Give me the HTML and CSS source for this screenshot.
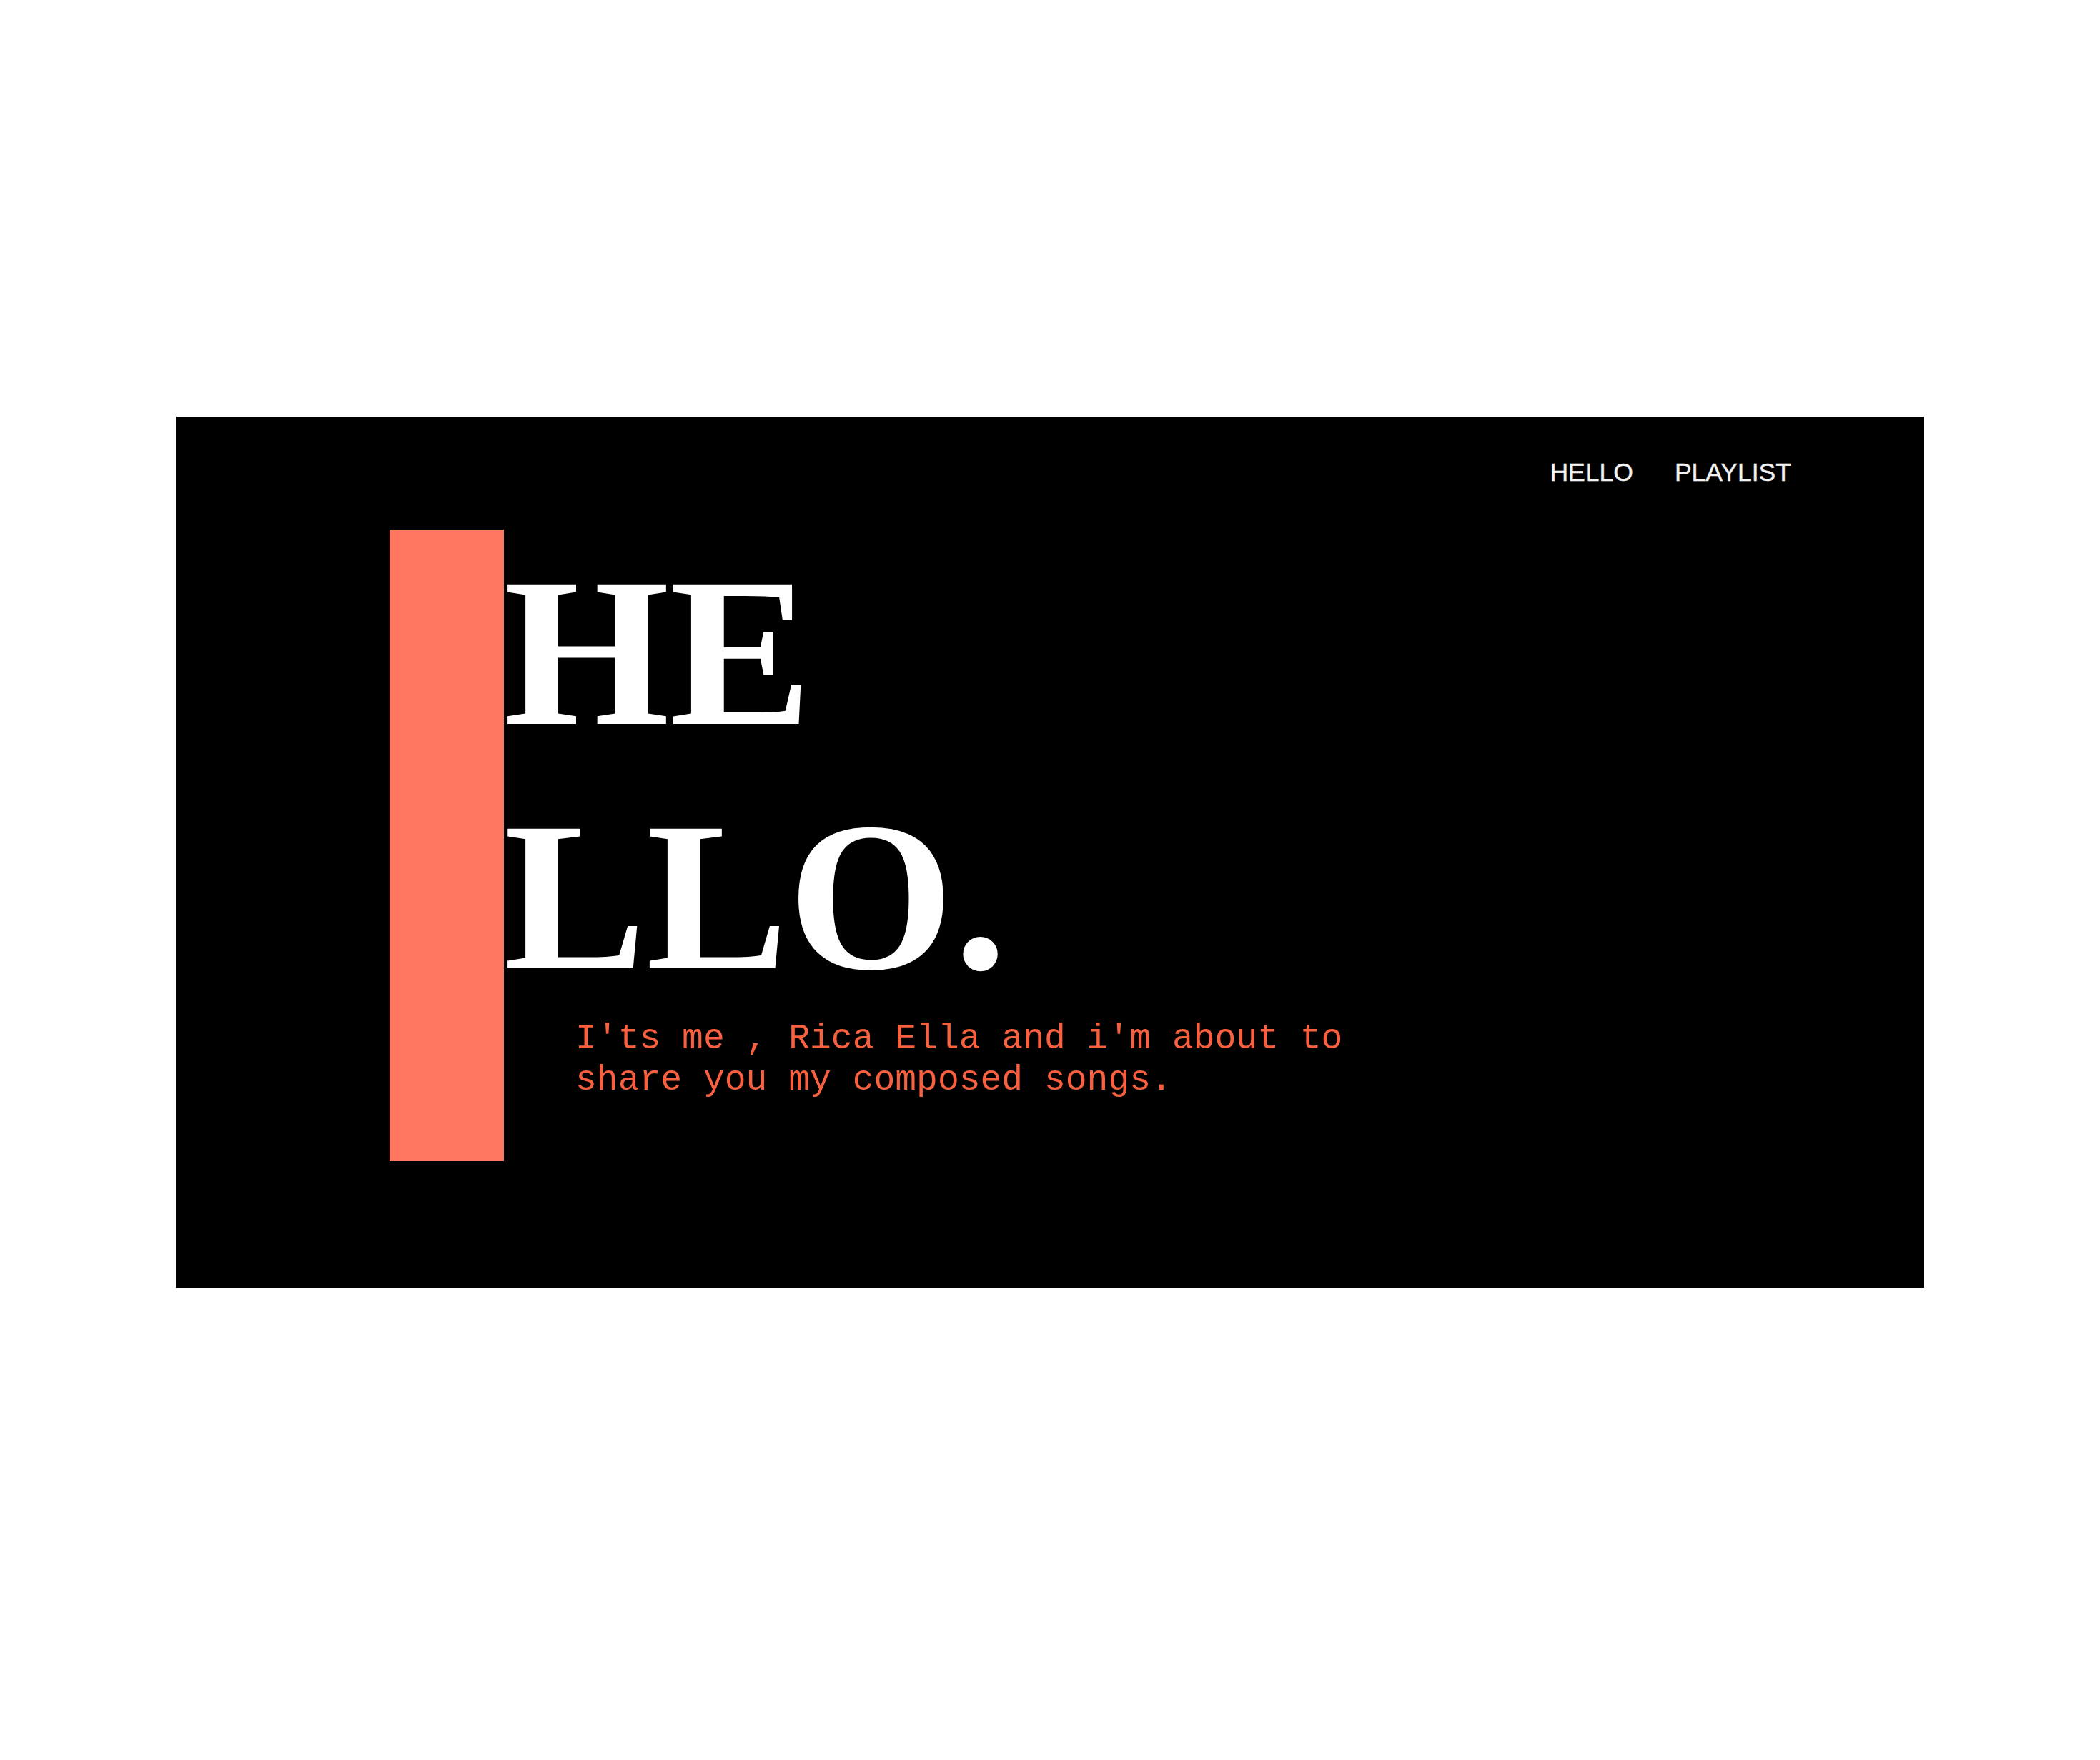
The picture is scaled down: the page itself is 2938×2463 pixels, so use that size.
FILE: index.html
```html
<!DOCTYPE html>
<html lang="en">
<head>
<meta charset="utf-8">
<title>Rica Ella</title>
<link rel="stylesheet" href="styles.css">
</head>
<body>
<section class="hero">
  <nav class="nav">
    <a class="nav-link" href="#hello">HELLO</a>
    <a class="nav-link" href="#playlist">PLAYLIST</a>
  </nav>
  <div class="main">
    <div class="bar"></div>
    <div class="content">
      <h1 class="title"><span class="title-line">HE</span><span class="title-line">LLO.</span></h1>
      <p class="intro">I'ts me , Rica Ella and i'm about to share you my composed songs.</p>
    </div>
  </div>
</section>
</body>
</html>
```
FILE: styles.css
```css
html, body {
  margin: 0;
  padding: 0;
  background: #ffffff;
}

.hero {
  box-sizing: border-box;
  width: 2446px;
  height: 1219px;
  margin: 583px auto 0;
  background: #000000;
  padding: 58px 186px 0 299px;
  display: flex;
  flex-direction: column;
}

.nav {
  display: flex;
  justify-content: flex-end;
  gap: 58px;
  line-height: 40px;
}

.nav-link {
  font-family: "Liberation Sans", Arial, sans-serif;
  font-size: 35.5px;
  color: #f2f2f2;
  text-decoration: none;
  -webkit-text-stroke: 0.4px #f2f2f2;
}

.main {
  display: flex;
  margin-top: 60px;
}

.bar {
  width: 160px;
  height: 884px;
  background: #ff7661;
  flex: none;
}

.content {
  display: flex;
  flex-direction: column;
}

.title {
  margin: 0;
  font-family: "Liberation Serif", "Times New Roman", serif;
  font-weight: bold;
  font-size: 298px;
  line-height: 342px;
  color: #ffffff;
}

.title-line {
  display: block;
}

.intro {
  margin: 0 0 0 100px;
  width: 1150px;
  font-family: "Liberation Mono", "Courier New", monospace;
  font-size: 49.7px;
  line-height: 58px;
  color: #f9603f;
}
```
